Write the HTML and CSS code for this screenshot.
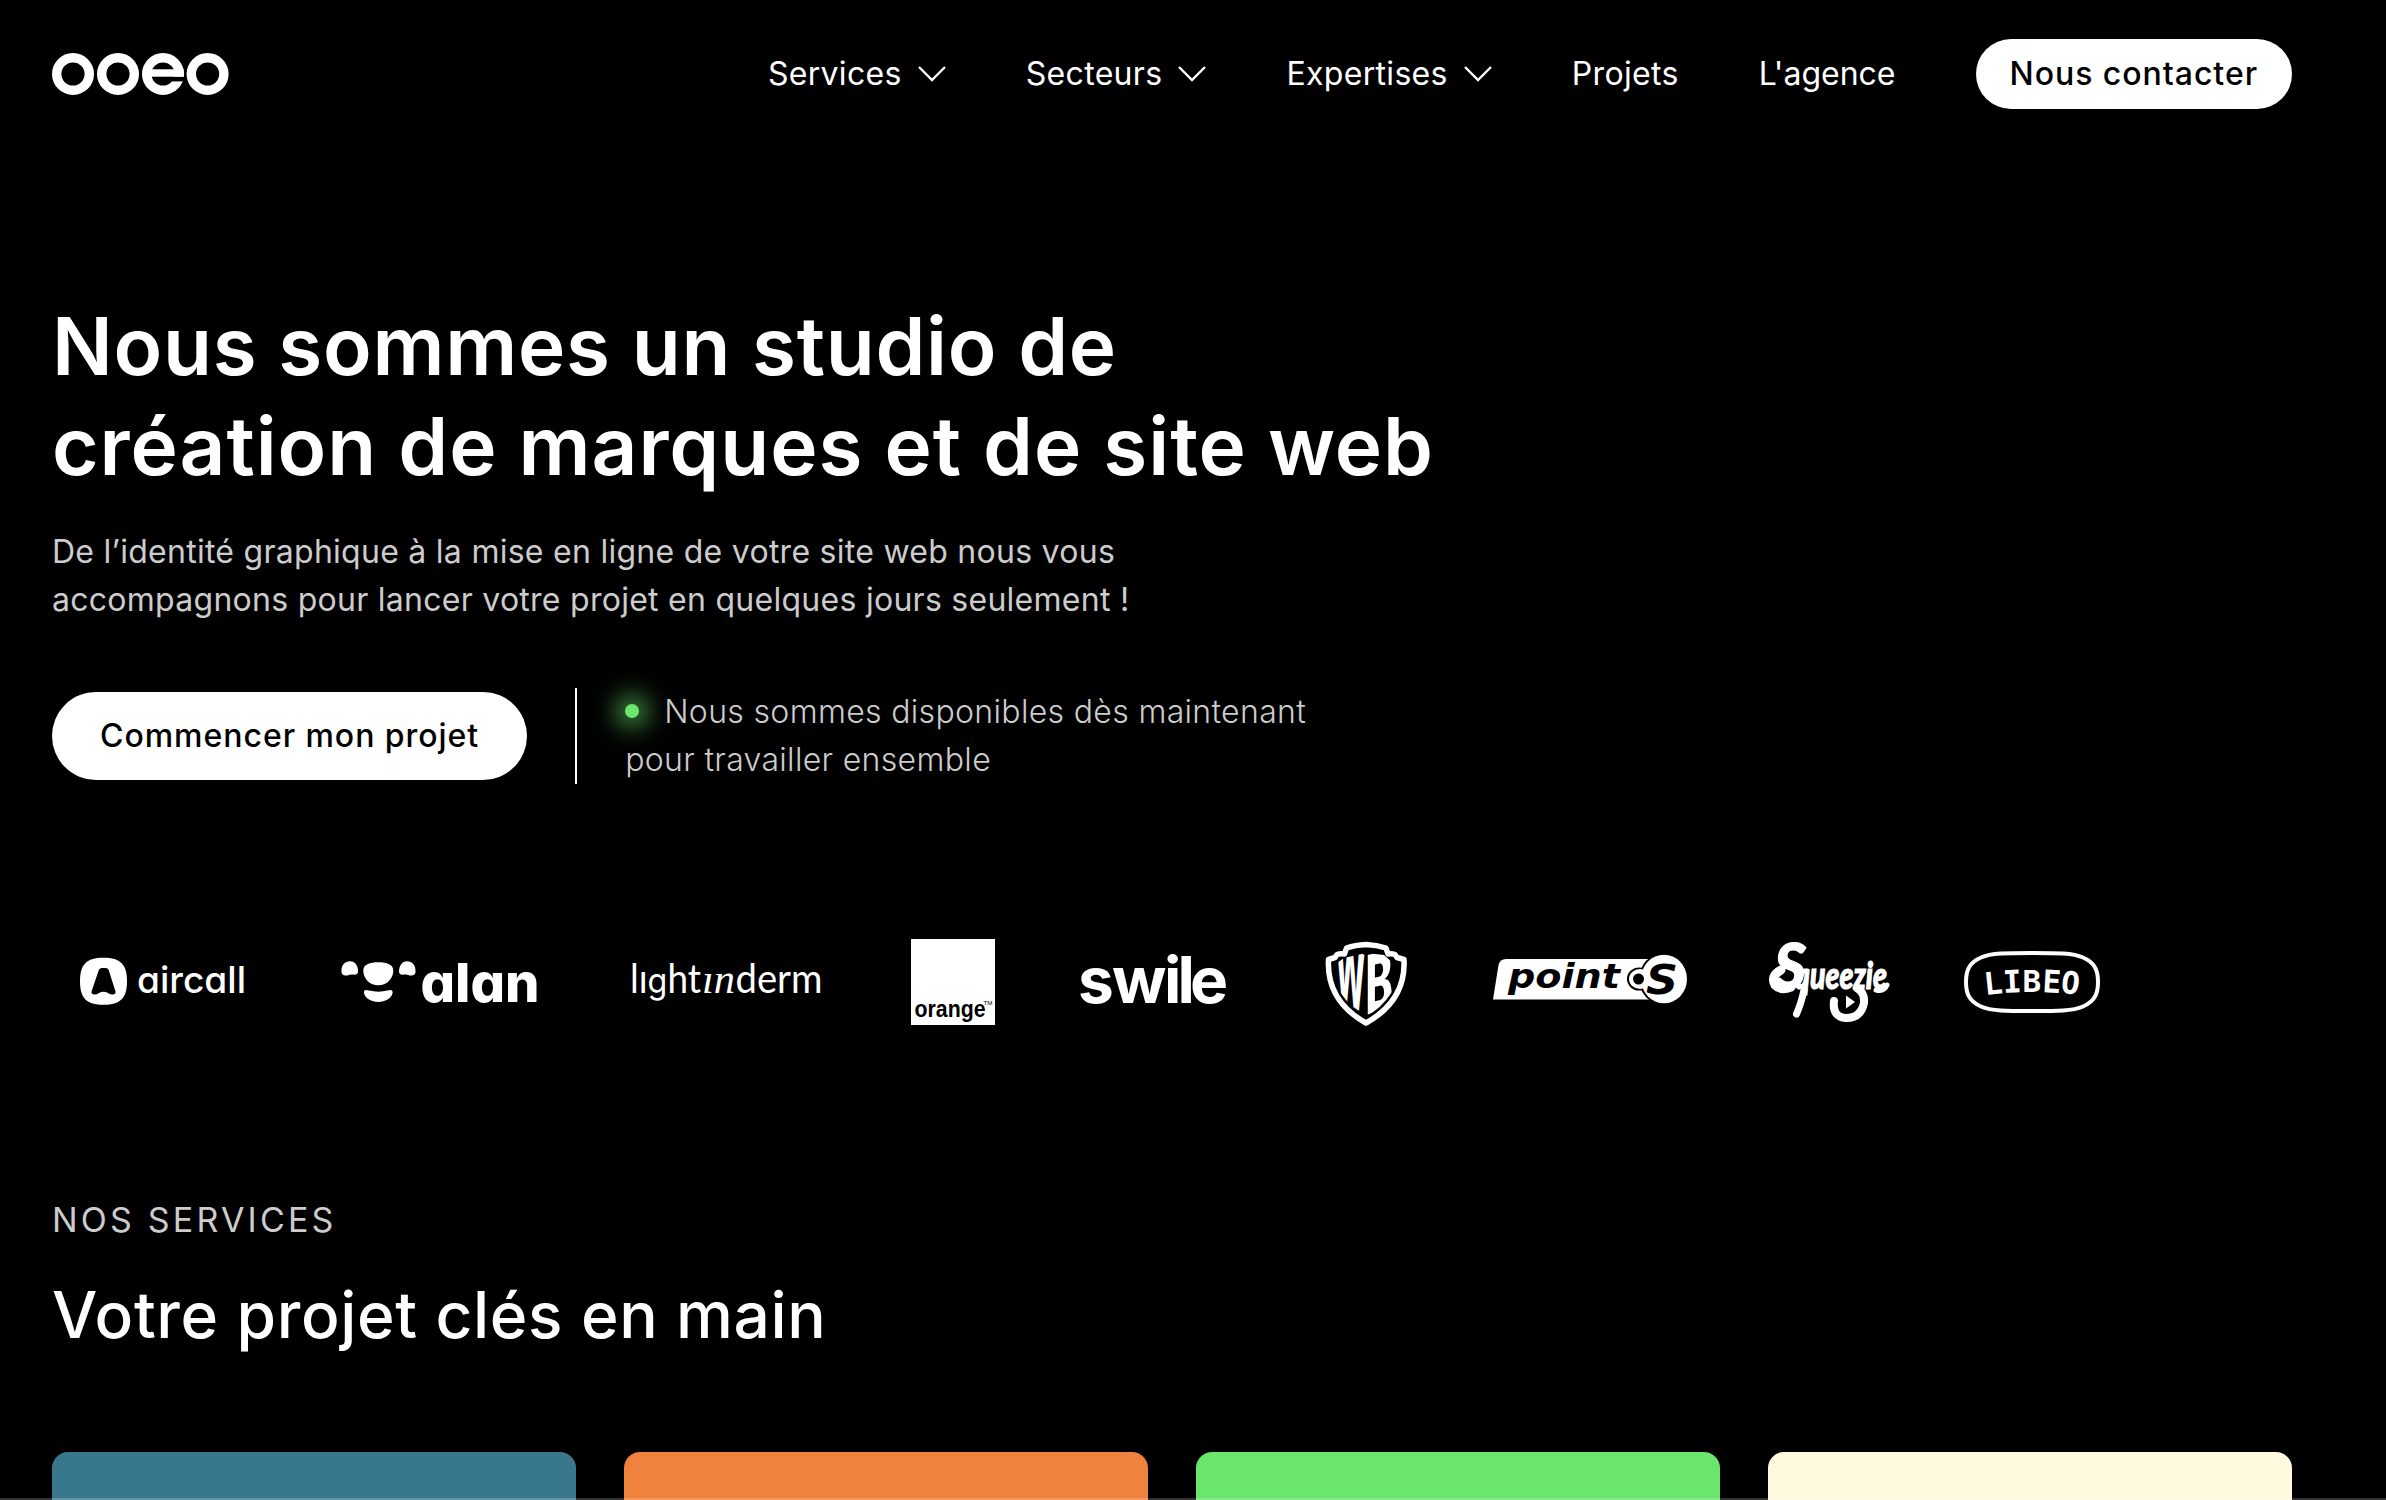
FILE: index.html
```html
<!DOCTYPE html>
<html lang="fr">
<head>
<meta charset="utf-8">
<title>ooeo – Studio de création</title>
<link rel="stylesheet" href="styles.css">
</head>
<body>
<header class="header">
  <a class="brand" aria-label="ooeo">
    <svg class="brand-mark" viewBox="52 53 177 42" fill="none" stroke="#fff" stroke-width="9.4">
      <circle cx="73" cy="74" r="16.3"/>
      <circle cx="118" cy="74" r="16.3"/>
      <circle cx="163" cy="74" r="16.3"/>
      <rect x="171" y="76.7" width="14" height="4.7" fill="#000" stroke="none"/>
      <rect x="150" y="69.3" width="33.8" height="7.4" fill="#fff" stroke="none"/>
      <circle cx="207.6" cy="74" r="16.3"/>
    </svg>
  </a>
  <nav class="nav">
    <a class="nav-link">Services<svg class="chevron" viewBox="0 0 28 16"><path d="M1 1l13 13L27 1"/></svg></a>
    <a class="nav-link">Secteurs<svg class="chevron" viewBox="0 0 28 16"><path d="M1 1l13 13L27 1"/></svg></a>
    <a class="nav-link">Expertises<svg class="chevron" viewBox="0 0 28 16"><path d="M1 1l13 13L27 1"/></svg></a>
    <a class="nav-link">Projets</a>
    <a class="nav-link nav-link-plain">L'agence</a>
    <a class="button button-small">Nous contacter</a>
  </nav>
</header>
<main>
  <section class="hero">
    <h1 class="hero-title">Nous sommes un studio de<br><span class="hero-title-wide">création de marques et de site web</span></h1>
    <p class="hero-text">De l’identité graphique à la mise en ligne de votre site web nous vous<br>accompagnons pour lancer votre projet en quelques jours seulement !</p>
    <div class="hero-actions">
      <a class="button button-large">Commencer mon projet</a>
      <p class="availability"><i class="dot"></i>Nous sommes disponibles dès maintenant<br>pour travailler ensemble</p>
    </div>
  </section>
  <section class="clients">
    <svg class="client aircall" viewBox="80 932 166 100">
      <path fill="#fff" d="M103.500 957.800C120.500 957.800 127 964.500 127 981.300S120.500 1004.800 103.500 1004.800 80 998.300 80 981.300 86.500 957.800 103.500 957.800z"/>
      <path fill="#000" d="M99 969.500Q100 968 102 968h3.500Q107.600 968 108.500 969.500L115.500 991.500Q116 994.500 112.500 994.500 110 994.500 108 993 103.500 990.500 99 993 97 994.500 94.500 994.500 91 994.500 91.500 991.500z"/>
      <text class="geo" x="137" y="993" font-size="37" font-weight="500" textLength="109" lengthAdjust="spacingAndGlyphs">aircall</text>
    </svg>
    <svg class="client alan" viewBox="341 932 198 100">
      <g fill="#fff">
        <path d="M341.500 972C341 965 345 961.300 350 961.300 355 961.300 358.500 966 358 972 357.500 975.500 354 974.500 351.500 974.500 348.500 974.500 348 976 345.500 975.500 343 975.500 341.700 974 341.500 972z"/>
        <path d="M415.500 972C416 965 412 961.300 407 961.300 402 961.300 399 966 399 972 399.500 975.500 403 974.500 405.500 974.500 408.500 974.500 409 976 411.500 975.500 414 975.500 415.300 974 415.500 972z"/>
        <path d="M363.300 971C363 964.500 370 962.300 378.300 962.300S393.600 964.500 393.300 971C393 979 386.500 985.300 378.300 985.300S363.500 979 363.300 971z"/>
        <path d="M364 993C363.500 989.500 366.500 989.800 369 990.500 375 992 381.500 992 387.500 990.500 390 989.800 393 989.500 392.600 993 391.500 998.500 385 1002 378.300 1002S365 998.500 364 993z"/>
      </g>
      <text class="geo" x="420.500" y="1001.500" font-size="54" font-weight="800" textLength="119" lengthAdjust="spacingAndGlyphs">alan</text>
    </svg>
    <svg class="client lightinderm" viewBox="631 932 191 100">
      <text class="lato" x="630" y="993" font-size="40" textLength="71" lengthAdjust="spacingAndGlyphs">lı<tspan class="geo" font-size="35">g</tspan>ht</text>
      <text class="serif" x="702" y="993" font-size="40" textLength="33" lengthAdjust="spacingAndGlyphs">ın</text>
      <text class="lato" x="735.500" y="993" font-size="40" textLength="87" lengthAdjust="spacingAndGlyphs">derm</text>
    </svg>
    <svg class="client orange" viewBox="911 932 84 100">
      <rect x="911" y="939" width="84" height="86" fill="#fff"/>
      <text class="arial" x="914.500" y="1017.300" font-size="23" textLength="71" lengthAdjust="spacingAndGlyphs">orange</text>
      <text class="tm" x="983.500" y="1005" font-size="6" textLength="9" lengthAdjust="spacingAndGlyphs">TM</text>
    </svg>
    <svg class="client swile" viewBox="1079 932 149 100">
      <text class="inter" x="1078 1112 1164 1177.500 1190" y="1002.700" font-size="64" font-weight="700">swile</text>
    </svg>
    <svg class="client wb" viewBox="1325 932 82 100">
      <clipPath id="shield"><path d="M1366 953L1384 955 1393 963Q1401 975 1392 992 1380 1010 1366 1016 1352 1010 1340 992 1331 975 1337 963L1344 958z"/></clipPath>
      <path fill="none" stroke="#fff" stroke-width="5.500" stroke-linejoin="round" d="M1366 944.500Q1355 945 1346.500 948L1344.500 954Q1340 953.500 1337 954.500L1335 957.500 1328.500 959.500C1327 988 1341 1009 1366 1023 1391 1009 1405.500 988 1404 959.500L1397 957.500 1395 954.500Q1392 953.500 1388 954L1386 948Q1377 945 1366 944.500z"/>
      <g clip-path="url(#shield)">
        <text class="inter" transform="translate(1335.500 995) skewY(34) scale(.73 2.150)" font-size="38" font-weight="800">W</text>
        <text class="inter" transform="translate(1365.500 1015) skewY(-14) scale(1.080 2.150)" font-size="38" font-weight="800">B</text>
      </g>
    </svg>
    <svg class="client points" viewBox="1493 932 195 100">
      <path fill="#fff" d="M1493 999.500L1498.500 965Q1500 959 1506 959H1660V999.500z"/>
      <ellipse cx="1664" cy="979" rx="25" ry="26" fill="#000"/>
      <ellipse cx="1639" cy="979" rx="12" ry="11.500" fill="#000"/>
      <ellipse cx="1664" cy="979" rx="23" ry="24.300" fill="#fff"/>
      <ellipse cx="1640" cy="979" rx="11" ry="10" fill="#fff"/>
      <circle cx="1638.500" cy="979" r="5.500" fill="#000"/>
      <text class="dejavu" x="1508" y="988" font-size="33" textLength="112" lengthAdjust="spacingAndGlyphs">point</text>
      <text class="dejavu" x="1646" y="993.500" font-size="40" textLength="32" lengthAdjust="spacingAndGlyphs">S</text>
    </svg>
    <svg class="client squeezie" viewBox="1768 932 123 100">
      <g fill="none" stroke="#fff" stroke-linecap="round">
        <path stroke-width="9" d="M1791 987Q1781 991 1775 985 1770 976 1781 970"/>
        <path stroke-width="7" d="M1804 990Q1801 1004 1796.500 1014"/>
        <path stroke-width="8" d="M1834 1001Q1832 1017 1846 1018 1861 1018 1864 1003 1865 993 1857 988"/>
        <path stroke-width="5" d="M1876 990Q1884 992 1887 985"/>
      </g>
      <path fill="#fff" d="M1846 995.500l9 6.500-9 6.500z"/>
      <text class="script" x="1774" y="989" font-size="62" textLength="32" lengthAdjust="spacingAndGlyphs">S</text>
      <text class="script" x="1795" y="989" font-size="38" textLength="92" lengthAdjust="spacingAndGlyphs">queezie</text>
    </svg>
    <svg class="client libeo" viewBox="1963 932 138 100">
      <path fill="none" stroke="#fff" stroke-width="4" d="M2032 953C2007 953 1991 953 1981 957.500 1968 963 1966 972 1966 982S1968 1001 1981 1006.500C1991 1011 2007 1011 2032 1011S2073 1011 2083 1006.500C2096 1001 2098 992 2098 982S2096 963 2083 957.500C2073 953 2057 953 2032 953z"/>
      <text class="mono" font-size="31" x="1985 2003.500 2022.500 2042 2060" y="995 993 992 992 992.500" rotate="-6 -3 0 3 7">LIBEO</text>
    </svg>
  </section>
  <section class="services">
    <p class="eyebrow">NOS SERVICES</p>
    <h2 class="services-title">Votre projet clés en main</h2>
    <div class="cards">
      <article class="card card-blue"></article>
      <article class="card card-orange"></article>
      <article class="card card-green"></article>
      <article class="card card-cream"></article>
    </div>
  </section>
</main>
<div class="edge"></div>
</body>
</html>
```
FILE: styles.css
```css
* { box-sizing: border-box; }
body {
  margin: 0;
  background: #000;
  color: #fff;
  font-family: Inter, sans-serif;
  font-size: 32px;
  line-height: 48px;
}
h1, h2, p { margin: 0; }
.header {
  display: flex;
  align-items: center;
  justify-content: space-between;
  height: 148px;
  padding: 0 94px 0 52px;
}
.brand { display: flex; }
.brand-mark { width: 177px; height: 42px; }
.nav { display: flex; align-items: center; gap: 80px; }
.nav-link { display: flex; align-items: center; gap: 16px; letter-spacing: 0.32px; }
.nav-link-plain { letter-spacing: 0; }
.chevron { width: 28px; height: 16px; fill: none; stroke: #fff; stroke-width: 2.4; }
.button {
  display: flex;
  align-items: center;
  background: #fff;
  color: #000;
  font-weight: 500;
  letter-spacing: 0.96px;
  white-space: nowrap;
}
.button-small { height: 70px; padding: 0 34px; border-radius: 35px; }
.button-large { height: 88px; padding: 0 48px; border-radius: 44px; }
.hero { padding: 148px 52px 0; }
.hero-title { font-size: 80px; line-height: 100px; font-weight: 600; letter-spacing: 0.75px; }
.hero-title-wide { letter-spacing: 0.96px; }
.hero-text { margin-top: 32px; color: #ccc; letter-spacing: 0.27px; }
.hero-actions { display: flex; align-items: center; gap: 48px; margin-top: 64px; }
.availability {
  padding-left: 48px;
  border-left: 2px solid #fff;
  color: #ccc;
  font-weight: 300;
  letter-spacing: 0.33px;
}
.dot {
  display: inline-block;
  width: 14px;
  height: 14px;
  margin-right: 25px;
  vertical-align: 5px;
  border-radius: 50%;
  background: #6ae66c;
  box-shadow: 0 0 26px 7px rgba(106, 230, 108, 0.85);
}
.clients { display: flex; height: 100px; margin: 148px 0 0 80px; }
.client { height: 100px; flex: none; overflow: visible; }
.client text { fill: #fff; }
.aircall { width: 166px; }
.alan { width: 198px; margin-left: 95px; }
.lightinderm { width: 191px; margin-left: 92px; }
.orange { width: 84px; margin-left: 89px; }
.swile { width: 149px; margin-left: 84px; }
.wb { width: 82px; margin-left: 97px; }
.points { width: 195px; margin-left: 86px; }
.squeezie { width: 123px; margin-left: 80px; }
.libeo { width: 138px; margin-left: 72px; }
.client .geo { font-family: Inter, sans-serif; font-feature-settings: "cv11"; }
.client .inter { font-family: Inter, sans-serif; }
.client .lato { font-family: Lato, sans-serif; }
.client .serif { font-family: "Liberation Serif", serif; font-style: italic; }
.client .arial { font-family: "Liberation Sans", sans-serif; font-weight: 700; fill: #000; }
.client .tm { font-family: "Liberation Sans", sans-serif; fill: #000; }
.client .dejavu { font-family: "DejaVu Sans", sans-serif; font-weight: 700; font-style: oblique; fill: #000; }
.client .script { font-family: Lato, sans-serif; font-weight: 900; font-style: italic; stroke: #fff; stroke-width: 1.2; }
.client .mono { font-family: "DejaVu Sans Mono", monospace; font-weight: 700; }
.services { padding: 162px 94px 0 52px; }
.eyebrow { font-size: 34px; line-height: 52px; letter-spacing: 3.2px; color: #ccc; }
.services-title { margin-top: 29px; font-size: 64px; line-height: 80px; font-weight: 500; letter-spacing: 0.66px; }
.cards { display: grid; grid-template-columns: repeat(4, 1fr); gap: 48px; margin-top: 97px; }
.card { height: 48px; border-radius: 16px 16px 0 0; }
.card-blue { background: #39778c; }
.card-orange { background: #ef823d; }
.card-green { background: #6ae66c; }
.card-cream { background: #fff9e0; }
.edge { position: absolute; left: 0; right: 0; top: 1498px; height: 2px; background: rgba(255, 255, 255, 0.2); }
```
